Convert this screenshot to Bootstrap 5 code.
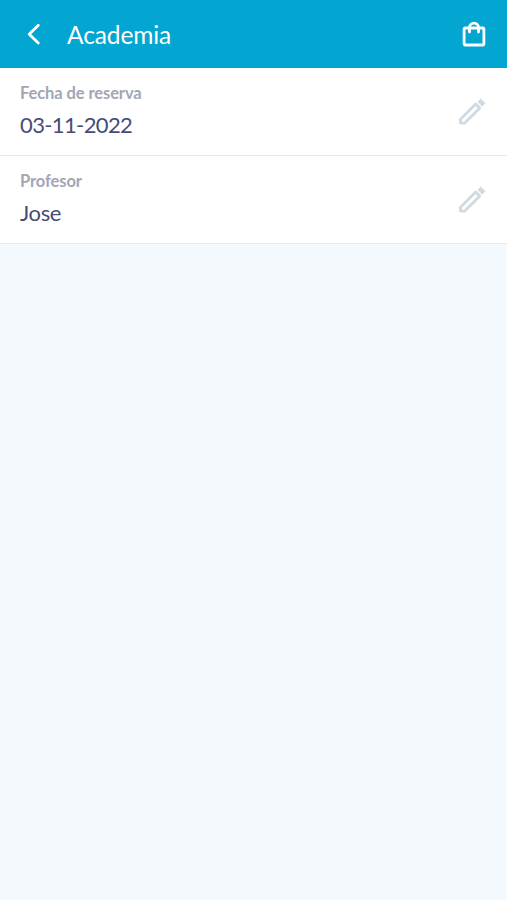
<!DOCTYPE html>
<html lang="es">
<head>
<meta charset="utf-8">
<meta name="viewport" content="width=device-width, initial-scale=1">
<title>Academia</title>
<link href="https://cdn.jsdelivr.net/npm/bootstrap@5.3.0/dist/css/bootstrap.min.css" rel="stylesheet">
<style>
body { font-family: Lato, sans-serif; background: #f4f9fd; min-height: 100vh; }
.topbar { background: #03a5d1; height: 68px; padding: 0 19px 0 20px; }
.back { width: 28px; height: 28px; margin-right: 19px; }
.title { font-size: 24.5px; line-height: 30px; letter-spacing: -.1px; padding-top: 2px; }
.field { height: 88px; padding: 15px 20px 0; border-bottom: 1px solid #e6eaee; }
.field-label { font-size: 16.5px; line-height: 20px; font-weight: 700; letter-spacing: -.09px; color: #a2a6b5; }
.field-value { font-size: 22px; line-height: 26px; letter-spacing: -.62px; margin-top: 9px; color: #464c76; }
.field-name { letter-spacing: -.35px; }
.edit { width: 32px; height: 32px; margin: 13px -2px 0 0; fill: none; stroke: #d0dae1; stroke-width: 2.8; stroke-linejoin: round; }
</style>
</head>
<body>
<header class="topbar d-flex align-items-center text-white">
  <a href="#" class="text-white d-flex" aria-label="Volver"><svg class="back" viewBox="0 0 28 28" fill="none" stroke="currentColor" stroke-width="2.8" stroke-linecap="round" stroke-linejoin="round"><path d="M18.300 5.200 9.200 14.200l9.100 8.900"/></svg></a>
  <h1 class="title fw-normal mb-0">Academia</h1>
  <svg class="ms-auto" width="28" height="28" viewBox="0 0 28 28" fill="none" stroke="currentColor" stroke-width="2.8" stroke-linejoin="round" stroke-linecap="round"><rect x="4.100" y="8" width="19.800" height="17" rx="1.200"/><path d="M9.500 12V7.500a4.500 4.300 0 0 1 9 0V12"/></svg>
</header>
<main>
  <section class="field bg-white d-flex justify-content-between align-items-start">
    <div><div class="field-label">Fecha de reserva</div><div class="field-value">03-11-2022</div></div>
    <svg class="edit" viewBox="0 0 32 32"><path d="M3.500 27.200v-4L18.700 8l4.100 4L7.600 27.200z"/><path d="m22.100 4.200 4.700 4.700" stroke-width="4.600"/></svg>
  </section>
  <section class="field bg-white d-flex justify-content-between align-items-start">
    <div><div class="field-label">Profesor</div><div class="field-value field-name">Jose</div></div>
    <svg class="edit" viewBox="0 0 32 32"><path d="M3.500 27.200v-4L18.700 8l4.100 4L7.600 27.200z"/><path d="m22.100 4.200 4.700 4.700" stroke-width="4.600"/></svg>
  </section>
</main>
<script src="https://cdn.jsdelivr.net/npm/bootstrap@5.3.0/dist/js/bootstrap.bundle.min.js"></script>
</body>
</html>
